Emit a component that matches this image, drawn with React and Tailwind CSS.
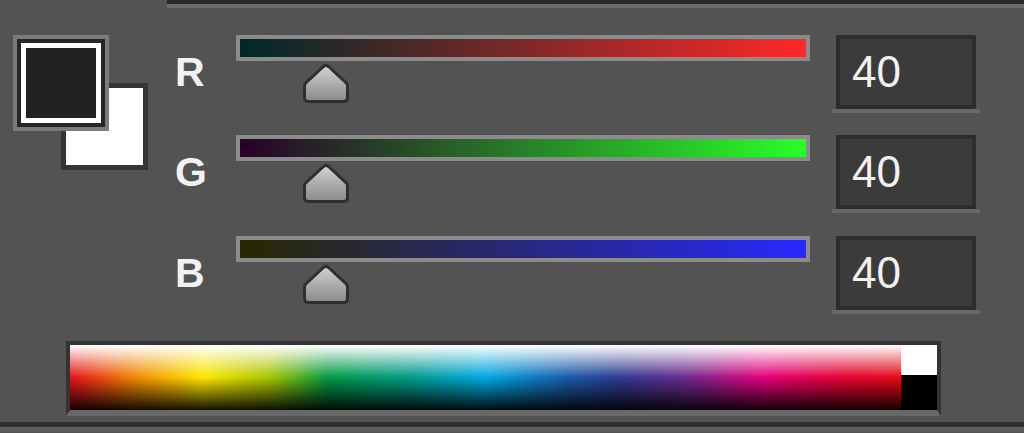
const channels = [
  { label: "R", value: 40, track: "bg-[linear-gradient(to_right,#002828,#ff2828)]", rowH: "h-[100px]" },
  { label: "G", value: 40, track: "bg-[linear-gradient(to_right,#280028,#28ff28)]", rowH: "h-[101px]" },
  { label: "B", value: 40, track: "bg-[linear-gradient(to_right,#282800,#2828ff)]", rowH: "h-[100px]" },
];

function Thumb() {
  return (
    <svg width="48" height="42" viewBox="0 0 48 42" className="block">
      <defs>
        <linearGradient id="thumbFill" x1="0" y1="0" x2="0" y2="1">
          <stop offset="0%" stopColor="#d4d4d4" />
          <stop offset="55%" stopColor="#a9a9a9" />
          <stop offset="100%" stopColor="#8a8a8a" />
        </linearGradient>
      </defs>
      <path
        d="M 6.5 39.5 Q 2.5 39.5 2.5 35.5 L 2.5 24 Q 2.5 22 4 20.7 L 21.5 4.5 Q 24 2.3 26.5 4.5 L 44 20.7 Q 45.5 22 45.5 24 L 45.5 35.5 Q 45.5 39.5 41.5 39.5 Z"
        fill="url(#thumbFill)"
        stroke="#2f2f2f"
        strokeWidth="3"
        strokeLinejoin="round"
      />
    </svg>
  );
}

function Swatches() {
  return (
    <div className="relative w-[135px] h-[135px]">
      {/* background colour */}
      <div className="absolute left-[48px] top-[48px] w-[87px] h-[87px] border-[5px] border-[#353535] bg-white" />
      {/* foreground colour */}
      <div className="absolute left-0 top-0 w-[96px] h-[96px] border-4 border-[#7b7b7b]">
        <div className="w-full h-full border-4 border-[#262626]">
          <div className="w-full h-full border-[5px] border-white bg-[#222222]" />
        </div>
      </div>
    </div>
  );
}

export default function App() {
  return (
    <div
      className="w-[1024px] h-[433px] bg-[#535353] overflow-hidden text-[#f2f2f2]"
      style={{ fontFamily: '"Liberation Sans", Arial, sans-serif' }}
    >
      {/* top edge */}
      <div className="ml-[167px]">
        <div className="h-[4px] bg-[#292929]" />
        <div className="h-[4px] bg-[#6b6b6b]" />
      </div>

      <div className="flex pt-[27px]">
        <div className="w-[166px] pl-[13px]">
          <Swatches />
        </div>

        <div className="flex flex-col">
          {channels.map((c) => (
            <div key={c.label} className={`flex ${c.rowH}`}>
              <div className="w-[70px] h-[74px] pl-[9px] flex items-center text-[41px] font-bold leading-none">
                {c.label}
              </div>

              <div className="w-[574px]">
                <div className="h-[26px] border-4 border-[#8b8b8b]">
                  <div className={`w-full h-full ${c.track}`} />
                </div>
                <div className="ml-[66px] mt-[1px]">
                  <Thumb />
                </div>
              </div>

              <div className="ml-[26px]">
                <div className="w-[140px] h-[74px] border-4 border-[#2d2d2d] bg-[#3b3b3b] flex items-center pl-[12px] text-[44px] leading-none">
                  {c.value}
                </div>
                <div className="w-[148px] h-[4px] -ml-[4px] bg-[#686868]" />
              </div>
            </div>
          ))}
        </div>
      </div>

      {/* spectrum */}
      <div className="ml-[66px] mt-[5px] w-[875px] border-4 border-[#333333] border-b-[6px] border-b-[#686868] flex">
        <div className="w-[831px] h-[65px] bg-[linear-gradient(to_bottom,#ffffff_0%,rgba(255,255,255,0)_50%,rgba(0,0,0,0)_50%,rgba(0,0,0,0.92)_100%),linear-gradient(to_right,#e4101c_0%,#f08a00_8%,#fde500_16%,#a8c400_24%,#009a44_31%,#009a8a_41%,#00a8e2_50%,#1a5aa8_60%,#2e3a90_66%,#6a2a8e_74%,#e2007e_83%,#e4003a_92%,#e20a12_100%)]" />
        <div className="w-[36px] flex flex-col">
          <div className="h-[30px] bg-white" />
          <div className="h-[35px] bg-black" />
        </div>
      </div>

      {/* bottom edge */}
      <div className="mt-[6px] h-[5px] bg-[#2f2f2f]" />
      <div className="h-[5px] bg-[#5d5d5d]" />
    </div>
  );
}
